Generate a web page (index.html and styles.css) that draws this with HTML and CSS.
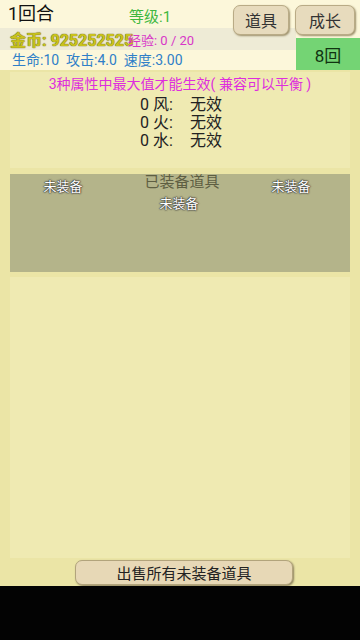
FILE: index.html
```html
<!DOCTYPE html>
<html>
<head>
<meta charset="utf-8">
<link rel="stylesheet" href="styles.css">
</head>
<body>
<div class="screen">
  <header class="header">
    <div class="row1">
      <div class="round">1回合</div>
      <div class="level">等级:1</div>
      <div class="btns">
        <button class="tbtn">道具</button>
        <button class="tbtn">成长</button>
      </div>
    </div>
    <div class="row2">
      <div class="left">
        <div class="goldrow">
          <span class="gold">金币: 925252525</span>
          <span class="exp">经验: 0 / 20</span>
        </div>
        <div class="stats">生命:10&nbsp; 攻击:4.0&nbsp; 速度:3.00</div>
      </div>
      <div class="right">
        <div class="turns">8回</div>
      </div>
    </div>
  </header>
  <main class="main">
    <section class="attrs">
      <div class="hint">3种属性中最大值才能生效( 兼容可以平衡 )</div>
      <div class="attrgrid">
        <span>0 风:</span><span>无效</span>
        <span>0 火:</span><span>无效</span>
        <span>0 水:</span><span>无效</span>
      </div>
    </section>
    <section class="equip">
      <div class="slot side">未装备</div>
      <div class="mid">
        <div class="etitle">已装备道具</div>
        <div class="slot">未装备</div>
      </div>
      <div class="slot side">未装备</div>
    </section>
    <section class="bag"></section>
    <div class="sellbar">
      <button class="sell">出售所有未装备道具</button>
    </div>
  </main>
  <div class="navbar"></div>
</div>
</body>
</html>
```
FILE: styles.css
```css
* { box-sizing: border-box; }
html, body { margin: 0; padding: 0; }
body {
  width: 360px;
  height: 640px;
  overflow: hidden;
  background: #ebe5a6;
  font-family: Roboto, "Noto Sans CJK SC", sans-serif;
  color: #222;
}
.screen { display: flex; flex-direction: column; height: 640px; }
.header { height: 70px; background: #fcf7da; }
.row1 { height: 28px; display: flex; align-items: center; }
.round { font-size: 18px; color: #111; padding-left: 8px; width: 129px; line-height: 28px; }
.level { font-size: 15px; color: #3fb83f; padding-top: 3px; }
.btns {
  margin-left: auto;
  align-self: flex-start;
  margin-top: 5px;
  margin-right: 5px;
  display: flex;
  gap: 6px;
  position: relative;
  z-index: 2;
  height: 30px;
}
.tbtn {
  width: 56px;
  height: 30px;
  padding: 0;
  border: 1px solid #b9ab86;
  border-radius: 7px;
  background: #e7dbbd;
  box-shadow: 1px 1px 2px #9c8f6a;
  font-family: Roboto, "Noto Sans CJK SC", sans-serif;
  font-size: 16px;
  color: #333;
}
.tbtn + .tbtn { width: 60px; }
.row2 { height: 42px; display: flex; }
.left { flex: 1; }
.goldrow {
  height: 22px;
  background: #eeebd6;
  display: flex;
  align-items: center;
  white-space: nowrap;
}
.gold {
  width: 128px;
  flex: none;
  padding-left: 10px;
  font-size: 16px;
  font-weight: bold;
  color: #c9c21c;
  text-shadow: 0 0 1px #6b6410, 0 0 1px #6b6410;
  display: inline-block;
}
.exp { font-size: 13px; color: #d836c8; position: relative; }
.stats {
  height: 20px;
  line-height: 20px;
  font-size: 14px;
  color: #2f7fc8;
  padding-left: 12px;
  white-space: nowrap;
}
.right { width: 64px; padding-top: 10px; background: #fcf7da; }
.turns {
  height: 32px;
  background: #74d474;
  color: #113311;
  font-size: 17px;
  display: flex;
  align-items: center;
  justify-content: center;
}
.main { padding: 0 10px; flex: 1; display: flex; flex-direction: column; }
.attrs {
  margin-top: 2px;
  height: 96px;
  background: #efeab2;
  text-align: center;
  padding-top: 3px;
}
.hint { font-size: 14px; line-height: 18px; color: #de2ede; margin-bottom: 2px; white-space: nowrap; }
.attrgrid {
  display: inline-grid;
  grid-template-columns: auto auto;
  column-gap: 17px;
  font-size: 16px;
  line-height: 18px;
  color: #222;
  text-align: left;
  margin-left: 2px;
}
.equip {
  margin-top: 6px;
  height: 98px;
  background: #b4b48a;
  display: grid;
  grid-template-columns: 106px 1fr 118px;
  text-align: center;
}
.slot {
  font-size: 13px;
  line-height: 14px;
  color: #fff;
  text-shadow: 0 0 1px #333, 0 0 1px #333, 0 0 2px #444, 0 0 2px #555;
}
.side { padding-top: 6px; }
.mid { display: flex; flex-direction: column; align-items: center; padding-left: 10px; }
.etitle { font-size: 15px; line-height: 16px; color: #5e5e42; margin-bottom: 7px; padding-left: 6px; }
.bag { margin-top: 5px; height: 281px; background: #efeab2; }
.sellbar { height: 28px; display: flex; justify-content: center; padding-top: 2px; margin: 0 -10px; }
.sell {
  width: 218px;
  height: 25px;
  padding: 0;
  margin-left: 8px;
  border: 1px solid #b2a47c;
  border-radius: 7px;
  background: #e7d8b6;
  box-shadow: 1px 1px 2px #8e825e;
  font-family: Roboto, "Noto Sans CJK SC", sans-serif;
  font-size: 15px;
  color: #222;
}
.navbar { height: 54px; background: #030303; }
```
